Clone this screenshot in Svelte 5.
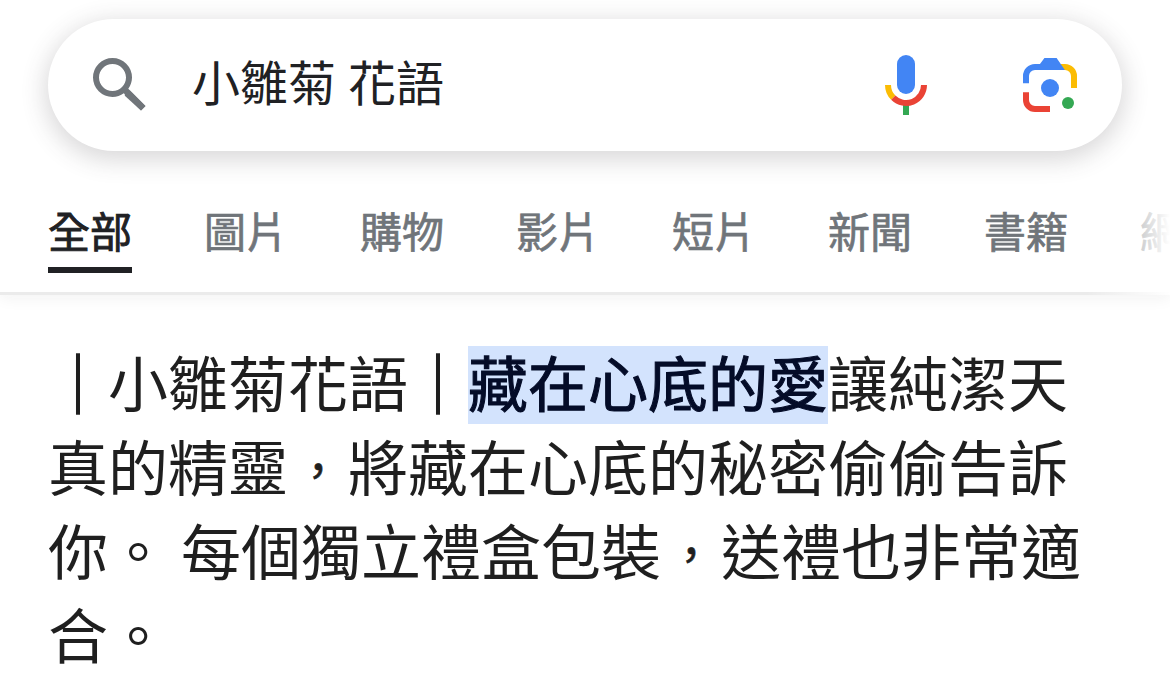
<script lang="ts">
	const query = "小雛菊 花語";

	let tabs = ["全部", "圖片", "購物", "影片", "短片", "新聞", "書籍", "網頁"];
	let active = $state("全部");
</script>

<div class="page">
	<header>
		<div class="search-box">
			<svg class="icon" viewBox="0 0 24 24">
				<path fill="#70757a" d="M20.49 19l-5.73-5.73C15.53 12.2 16 10.91 16 9.5A6.5 6.5 0 1 0 9.5 16c1.41 0 2.7-.47 3.77-1.24L19 20.49 20.49 19zM5 9.5C5 7.01 7.01 5 9.5 5S14 7.01 14 9.5 11.99 14 9.5 14 5 11.99 5 9.5z" />
				<path fill="#70757a" d="M13.6 14.5v1.1L19 20.49 20.49 19 15.3 13.8h-1.2z" />
			</svg>
			<div class="query">{query}</div>
			<svg class="icon mic" viewBox="0 0 24 24">
				<rect x="9" y="2" width="6" height="13" rx="3" fill="#4285f4" />
				<path fill="#34a853" d="M11 18.5h2V22h-2z" />
				<path fill="#fbbc04" d="M5 12h2a5 5 0 0 0 1.46 3.54l-1.41 1.41A7 7 0 0 1 5 12z" />
				<path fill="#ea4335" d="M17 12h2a7 7 0 0 1-11.95 4.95l1.41-1.41A5 5 0 0 0 17 12z" />
			</svg>
			<svg class="icon" viewBox="0 0 24 24">
				<path fill="#fbbc04" d="M15.4 5H17a4 4 0 0 1 4 4v4h-2V9a2 2 0 0 0-2-2h-1z" />
				<path fill="#4285f4" d="M3 11.4V9a4 4 0 0 1 4-4h1.65l1.5-2h4.05L16.95 7H7a2 2 0 0 0-2 2v2.4z" />
				<path fill="#ea4335" d="M3 14.4V17a4 4 0 0 0 4 4h5v-2H7a2 2 0 0 1-2-2v-2.6z" />
				<circle cx="12" cy="13" r="3" fill="#4285f4" />
				<circle cx="18" cy="18" r="2" fill="#34a853" />
			</svg>
		</div>
		<nav class="tabs">
			{#each tabs as tab}
				<button class="tab" class:active={tab === active} onclick={() => (active = tab)}>{tab}</button>
			{/each}
		</nav>
	</header>

	<p class="snippet"><span class="bar">｜</span>小雛菊花語<span class="bar">｜</span><mark>藏在心底的愛</mark>讓純潔天真的精靈<span class="comma">，</span>將藏在心底的秘密偷偷告訴你。 每個獨立禮盒包裝<span class="comma">，</span>送禮也非常適合。</p>
</div>

<style>
	:global(body) {
		margin: 0;
		background: #fff;
	}

	.page {
		height: 700px;
		overflow: hidden;
		font-family: Roboto, "Noto Sans CJK TC", sans-serif;
		color: #202124;
	}

	header {
		box-sizing: border-box;
		height: 295px;
		padding-top: 19px;
		border-bottom: 3px solid #ebebeb;
		box-shadow: 0 3px 15px rgba(32, 33, 36, 0.06);
		position: relative;
	}

	header::after {
		content: "";
		position: absolute;
		right: 0;
		top: 190px;
		bottom: -3px;
		width: 84px;
		background: linear-gradient(to right, rgba(255, 255, 255, 0), #fff);
	}

	.search-box {
		box-sizing: border-box;
		height: 132px;
		margin: 0 48px;
		padding: 0 36px;
		display: flex;
		align-items: center;
		border-radius: 66px;
		background: #fff;
		box-shadow: 0 6px 24px 3px rgba(64, 60, 67, 0.2);
	}

	.icon {
		width: 72px;
		height: 72px;
		flex: none;
	}

	.mic {
		margin-right: 72px;
	}

	.query {
		flex: 1;
		margin-left: 36px;
		font-size: 48px;
		line-height: 72px;
	}

	.tabs {
		display: flex;
		gap: 72px;
		height: 122px;
		padding: 38px 0 0 48px;
		box-sizing: border-box;
		overflow: hidden;
	}

	.tab {
		flex: none;
		box-sizing: border-box;
		height: 84px;
		padding: 11px 0 0;
		border: none;
		border-bottom: 6px solid transparent;
		background: none;
		font-family: inherit;
		font-size: 42px;
		line-height: 67px;
		color: #70757a;
		-webkit-text-stroke: 0.7px currentColor;
	}

	.active {
		color: #202124;
		border-bottom-color: #202124;
		-webkit-text-stroke-width: 0.9px;
	}

	.snippet {
		margin: 50px 48px 0;
		font-size: 60px;
		line-height: 84px;
		word-spacing: -2px;
		color: #1f1f1f;
	}

	.bar {
		-webkit-text-stroke: 1.5px currentColor;
	}

	.comma {
		display: inline-block;
		width: 60px;
		font-size: 45px;
		line-height: 1;
		text-align: center;
		vertical-align: 3px;
		-webkit-text-stroke: 0.6px currentColor;
	}

	mark {
		padding: 5px 0 2px;
		color: #040c28;
		background: #d3e3fd;
		-webkit-text-stroke: 1.1px currentColor;
	}
</style>
